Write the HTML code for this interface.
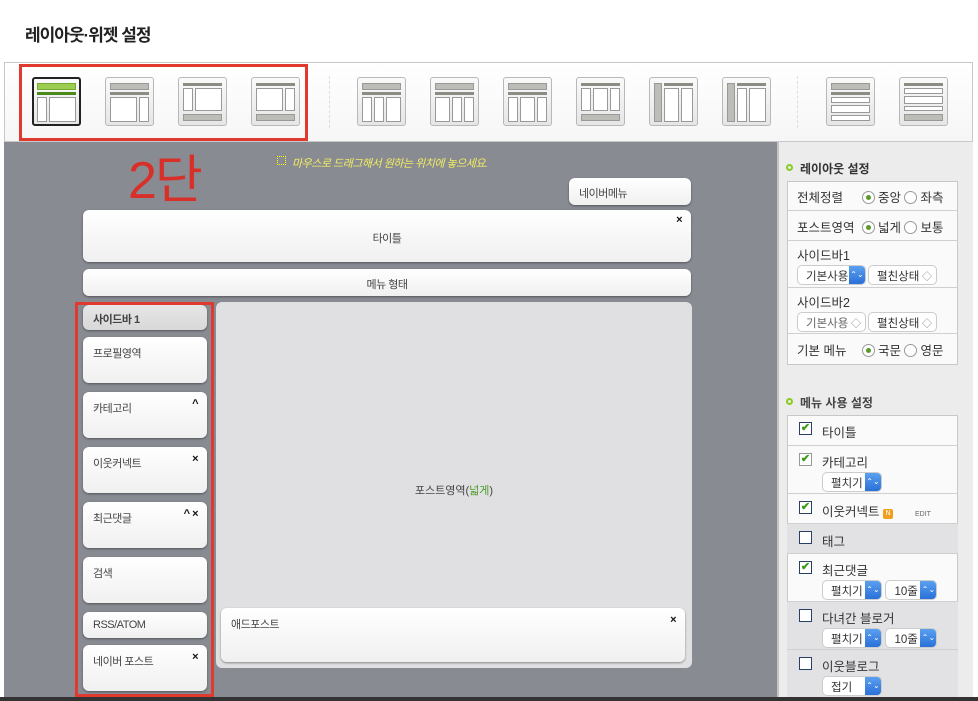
<!DOCTYPE html>
<html><head><meta charset="utf-8"><style>
*{box-sizing:border-box;margin:0;padding:0}
body{width:978px;height:701px;overflow:hidden;background:#fff;font-family:"Liberation Sans","Noto Sans CJK KR",sans-serif;position:relative;font-size:12px;color:#333}
.a{position:absolute}
.ic{position:absolute;top:77px;width:49px;height:49px;border:1px solid #b8b8b8;border-radius:3px;background:linear-gradient(#fafafa,#e6e6e6)}
.ic i{position:absolute;display:block}
.b{background:#bdbdb8;border:1px solid #999}
.w{background:#fff;border:1px solid #999}
.d{background:#8c8c84}
.wg{position:absolute;background:linear-gradient(#fff,#f0f0f0);border-radius:6px;box-shadow:0 1px 2px rgba(0,0,0,.4);font-size:11px;color:#444;padding:8px 10px;letter-spacing:-.5px}
.x{position:absolute;right:9px;top:6px;font-weight:bold;font-size:11px;color:#111}
.rp{font-size:12.5px;color:#333}
.row{position:absolute;left:787px;width:171px;border-bottom:1px solid #d0d0d0;padding:7px 10px}
.rd{display:inline-block;width:13px;height:13px;border:1px solid #999;border-radius:50%;background:#fff;vertical-align:-2px;margin-right:3px;position:relative}
.rd.on:after{content:"";position:absolute;left:3px;top:3px;width:5px;height:5px;border-radius:50%;background:#5a9a2a}
.sel{display:inline-block;height:20px;border:1px solid #ccc;border-radius:5px;background:#fff;font-size:11.5px;padding:2px 0 0 8px;position:relative;vertical-align:top;color:#333}
.sel.bl:after{content:"⌃⌄";position:absolute;right:0;top:0;width:16px;height:18px;background:linear-gradient(#5aa0f0,#2a70d8);border-radius:0 4px 4px 0;color:#fff;font-size:8px;text-align:center;line-height:18px}
.sel.gr:after{content:"◇";position:absolute;right:4px;top:2px;color:#888;font-size:10px}
.cb{position:absolute;left:12px;top:7px;width:13px;height:13px;border:1px solid #2a3f66;background:#fff;color:#3a9a1a;font-size:11px;line-height:11px;text-align:center;font-weight:bold}
.mt{position:absolute;left:35px;top:7px}
</style></head><body>
<div class="a" style="left:25px;top:21px;font-size:17px;font-weight:bold;color:#222;letter-spacing:-1px">레이아웃·위젯 설정</div>
<div class="a" style="left:4px;top:62px;width:969px;height:80px;border:1px solid #c8c8c8;background:linear-gradient(#fff,#f6f6f6)"></div>
<div class="ic" style="left:32px;border:2px solid #222"><i style="left:3px;top:4px;width:39px;height:7px;background:#9ccc50;border:1px solid #7a3"></i><i style="left:3px;top:13px;width:39px;height:3px;background:#4a8a18"></i><i class="w" style="left:3px;top:18px;width:10px;height:25px"></i><i class="w" style="left:15px;top:18px;width:27px;height:25px"></i></div>
<div class="ic" style="left:105px"><i class="b" style="left:4px;top:5px;width:39px;height:7px"></i><i class="d" style="left:4px;top:14px;width:39px;height:3px"></i><i class="w" style="left:4px;top:19px;width:27px;height:25px"></i><i class="w" style="left:33px;top:19px;width:10px;height:25px"></i></div>
<div class="ic" style="left:178px"><i class="d" style="left:4px;top:5px;width:39px;height:3px"></i><i class="w" style="left:4px;top:10px;width:10px;height:23px"></i><i class="w" style="left:16px;top:10px;width:27px;height:23px"></i><i class="b" style="left:4px;top:36px;width:39px;height:7px"></i></div>
<div class="ic" style="left:251px"><i class="d" style="left:4px;top:5px;width:39px;height:3px"></i><i class="w" style="left:4px;top:10px;width:27px;height:23px"></i><i class="w" style="left:33px;top:10px;width:10px;height:23px"></i><i class="b" style="left:4px;top:36px;width:39px;height:7px"></i></div>
<div class="a" style="left:329px;top:76px;height:52px;border-left:1px dashed #ddd"></div>
<div class="ic" style="left:357px"><i class="b" style="left:4px;top:5px;width:39px;height:7px"></i><i class="d" style="left:4px;top:14px;width:39px;height:3px"></i><i class="w" style="left:4px;top:19px;width:10px;height:25px"></i><i class="w" style="left:16px;top:19px;width:10px;height:25px"></i><i class="w" style="left:28px;top:19px;width:15px;height:25px"></i></div>
<div class="ic" style="left:430px"><i class="b" style="left:4px;top:5px;width:39px;height:7px"></i><i class="d" style="left:4px;top:14px;width:39px;height:3px"></i><i class="w" style="left:4px;top:19px;width:15px;height:25px"></i><i class="w" style="left:21px;top:19px;width:10px;height:25px"></i><i class="w" style="left:33px;top:19px;width:10px;height:25px"></i></div>
<div class="ic" style="left:503px"><i class="b" style="left:4px;top:5px;width:39px;height:7px"></i><i class="d" style="left:4px;top:14px;width:39px;height:3px"></i><i class="w" style="left:4px;top:19px;width:10px;height:25px"></i><i class="w" style="left:16px;top:19px;width:15px;height:25px"></i><i class="w" style="left:33px;top:19px;width:10px;height:25px"></i></div>
<div class="ic" style="left:576px"><i class="d" style="left:4px;top:5px;width:39px;height:3px"></i><i class="w" style="left:4px;top:10px;width:10px;height:23px"></i><i class="w" style="left:16px;top:10px;width:15px;height:23px"></i><i class="w" style="left:33px;top:10px;width:10px;height:23px"></i><i class="b" style="left:4px;top:36px;width:39px;height:7px"></i></div>
<div class="ic" style="left:649px"><i class="b" style="left:4px;top:5px;width:8px;height:39px"></i><i class="d" style="left:14px;top:5px;width:29px;height:3px"></i><i class="w" style="left:14px;top:10px;width:15px;height:34px"></i><i class="w" style="left:31px;top:10px;width:12px;height:34px"></i></div>
<div class="ic" style="left:722px"><i class="b" style="left:4px;top:5px;width:8px;height:39px"></i><i class="d" style="left:14px;top:5px;width:29px;height:3px"></i><i class="w" style="left:14px;top:10px;width:10px;height:34px"></i><i class="w" style="left:26px;top:10px;width:17px;height:34px"></i></div>
<div class="a" style="left:797px;top:76px;height:52px;border-left:1px dashed #ddd"></div>
<div class="ic" style="left:826px"><i class="b" style="left:4px;top:5px;width:39px;height:7px"></i><i class="d" style="left:4px;top:14px;width:39px;height:3px"></i><i class="w" style="left:4px;top:19px;width:39px;height:6px"></i><i class="w" style="left:4px;top:27px;width:39px;height:8px"></i><i class="w" style="left:4px;top:37px;width:39px;height:6px"></i></div>
<div class="ic" style="left:899px"><i class="d" style="left:4px;top:5px;width:39px;height:3px"></i><i class="w" style="left:4px;top:10px;width:39px;height:6px"></i><i class="w" style="left:4px;top:18px;width:39px;height:8px"></i><i class="w" style="left:4px;top:28px;width:39px;height:5px"></i><i class="b" style="left:4px;top:36px;width:39px;height:7px"></i></div>
<div class="a" style="left:19px;top:64px;width:289px;height:77px;border:3px solid #e03a30"></div>
<div class="a" style="left:4px;top:142px;width:773px;height:556px;background:#898b93"></div>
<div class="a" style="left:777px;top:142px;width:196px;height:556px;background:#ececec;border-left:2px solid #c4c4c4"></div>
<div class="a" style="left:128px;top:138px;font-size:52px;color:#d83028;letter-spacing:-2px">2단</div>
<div class="a" style="left:277px;top:156px;width:9px;height:9px;border:1px dotted #ff0"></div>
<div class="a" style="left:292px;top:155px;font-size:11px;color:#f2ee60;font-style:italic;letter-spacing:-.5px">마우스로 드래그해서 원하는 위치에 놓으세요.</div>
<div class="wg" style="left:569px;top:178px;width:122px;height:27px;padding:7px 10px">네이버메뉴</div>
<div class="wg" style="left:83px;top:210px;width:608px;height:52px;text-align:center;padding-top:20px">타이틀<span class="x" style="top:4px">×</span></div>
<div class="wg" style="left:83px;top:269px;width:608px;height:27px;text-align:center;padding-top:7px">메뉴 형태</div>
<div class="a" style="left:216px;top:302px;width:476px;height:366px;background:#e0e0e2;border-radius:6px"></div>
<div class="a" style="left:216px;top:482px;width:476px;text-align:center;font-size:11px;color:#444">포스트영역(<span style="color:#4a9a2a">넓게</span>)</div>
<div class="wg" style="left:221px;top:608px;width:464px;height:54px">애드포스트<span class="x">×</span></div>
<div class="wg" style="left:83px;top:305px;width:124px;height:25px;background:linear-gradient(#e6e6e6,#d8d8d8);font-weight:bold;padding-top:6px">사이드바 1</div>
<div class="wg" style="left:83px;top:337px;width:124px;height:46px">프로필영역</div>
<div class="wg" style="left:83px;top:392px;width:124px;height:46px">카테고리<span class="x">^</span></div>
<div class="wg" style="left:83px;top:447px;width:124px;height:46px">이웃커넥트<span class="x">×</span></div>
<div class="wg" style="left:83px;top:502px;width:124px;height:46px">최근댓글<span class="x">^ ×</span></div>
<div class="wg" style="left:83px;top:557px;width:124px;height:46px">검색</div>
<div class="wg" style="left:83px;top:612px;width:124px;height:26px;padding-top:7px">RSS/ATOM</div>
<div class="wg" style="left:83px;top:645px;width:124px;height:46px">네이버 포스트<span class="x">×</span></div>
<div class="a" style="left:75px;top:302px;width:139px;height:395px;border:3px solid #e03a30"></div>
<div class="a" style="left:786px;top:164px;width:7px;height:7px;border:2px solid #8c2;border-radius:50%"></div>
<div class="a rp" style="left:800px;top:160px;font-weight:bold;font-size:12px">레이아웃 설정</div>
<div class="a" style="left:787px;top:181px;width:171px;height:184px;background:#fafafa;border:1px solid #c8c8c8"></div>
<div class="row rp" style="top:181px;height:30px;padding-top:6px">전체정렬 <span style="position:absolute;left:75px;top:6px"><span class="rd on"></span>중앙 <span class="rd"></span>좌측</span></div>
<div class="row rp" style="top:211px;height:30px;padding-top:6px">포스트영역 <span style="position:absolute;left:75px;top:6px"><span class="rd on"></span>넓게 <span class="rd"></span>보통</span></div>
<div class="row rp" style="top:241px;height:47px;padding-top:4px">사이드바1<br><span class="sel bl" style="width:69px;margin-top:1px">기본사용</span><span class="sel gr" style="width:69px;margin:1px 0 0 2px">펼친상태</span></div>
<div class="row rp" style="top:288px;height:46px;padding-top:4px">사이드바2<br><span class="sel gr" style="width:69px;margin-top:1px;color:#666">기본사용</span><span class="sel gr" style="width:69px;margin:1px 0 0 2px">펼친상태</span></div>
<div class="row rp" style="top:334px;height:31px;border:none;padding-top:6px">기본 메뉴 <span style="position:absolute;left:75px;top:6px"><span class="rd on"></span>국문 <span class="rd"></span>영문</span></div>
<div class="a" style="left:786px;top:398px;width:7px;height:7px;border:2px solid #8c2;border-radius:50%"></div>
<div class="a rp" style="left:800px;top:394px;font-weight:bold;font-size:12px;color:#444">메뉴 사용 설정</div>
<div class="a" style="left:787px;top:415px;width:171px;height:286px;background:#fafafa;border:1px solid #c8c8c8"></div>
<div class="row rp" style="top:415px;height:31px"><span class="cb">✔</span><span class="mt">타이틀</span></div>
<div class="row rp" style="top:446px;height:48px"><span class="cb" style="border-color:#999">✔</span><span class="mt" style="top:6px">카테고리<br><span class="sel bl" style="width:60px;margin-top:1px">펼치기</span></span></div>
<div class="row rp" style="top:494px;height:30px"><span class="cb">✔</span><span class="mt">이웃커넥트 <span style="display:inline-block;width:10px;height:10px;background:#f0a020;color:#fff;font-size:7px;line-height:10px;text-align:center;border-radius:2px;vertical-align:1px">N</span><span style="font-size:7px;color:#666;margin-left:22px">EDIT</span></span></div>
<div class="row rp" style="top:524px;height:30px;background:#e2e2e4"><span class="cb"></span><span class="mt">태그</span></div>
<div class="row rp" style="top:554px;height:48px"><span class="cb">✔</span><span class="mt" style="top:6px">최근댓글<br><span class="sel bl" style="width:60px;margin-top:1px">펼치기</span> <span class="sel bl" style="width:52px;margin-top:1px">10줄</span></span></div>
<div class="row rp" style="top:602px;height:48px;background:#e2e2e4"><span class="cb"></span><span class="mt" style="top:6px">다녀간 블로거<br><span class="sel bl" style="width:60px;margin-top:1px">펼치기</span> <span class="sel bl" style="width:52px;margin-top:1px">10줄</span></span></div>
<div class="row rp" style="top:650px;height:47px;background:#e2e2e4;border:none"><span class="cb"></span><span class="mt" style="top:6px">이웃블로그<br><span class="sel bl" style="width:60px;margin-top:1px">접기</span></span></div>
<div class="a" style="left:0;top:697px;width:978px;height:4px;background:#333"></div>
</body></html>
